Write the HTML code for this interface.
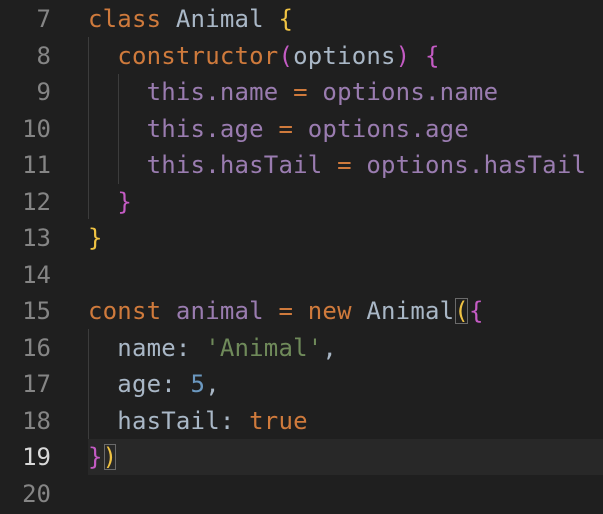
<html><head><style>
body{margin:0;background:#1f1f1f;width:603px;height:514px;overflow:hidden;position:relative;font-family:"DejaVu Sans Mono","Liberation Mono",monospace;font-size:24px;}
.l{position:absolute;left:0;height:36.5px;line-height:36.5px;white-space:pre;width:603px}
.n{position:absolute;right:552px;color:#858585;text-align:right}
.c{position:absolute;left:88px;color:#a9b7c6;letter-spacing:0.2px}
.k{color:#cf7a3c}.y{color:#f0c343}.p{color:#c45bc4}.v{color:#9a7cb0}.s{color:#6f8a5a}.m{color:#6b98c0}
.g{position:absolute;width:1px;background:#3c3c3c}
</style></head><body>
<div style="position:absolute;left:88px;top:439px;width:515px;height:36px;background:#282828"></div>
<div class="g" style="left:88px;top:37px;height:182px"></div>
<div class="g" style="left:118px;top:74px;height:110px"></div>
<div class="g" style="left:88px;top:329px;height:110px"></div>
<div class="l" style="top:1px"><span class="n">7</span><span class="c"><span class="k">class</span> Animal <span class="y">{</span></span></div>
<div class="l" style="top:37.5px"><span class="n">8</span><span class="c">  <span class="k">constructor</span><span class="p">(</span>options<span class="p">)</span> <span class="p">{</span></span></div>
<div class="l" style="top:74px"><span class="n">9</span><span class="c">    <span class="v">this.name</span> <span class="k">=</span> <span class="v">options.name</span></span></div>
<div class="l" style="top:110.5px"><span class="n">10</span><span class="c">    <span class="v">this.age</span> <span class="k">=</span> <span class="v">options.age</span></span></div>
<div class="l" style="top:147px"><span class="n">11</span><span class="c">    <span class="v">this.hasTail</span> <span class="k">=</span> <span class="v">options.hasTail</span></span></div>
<div class="l" style="top:183.5px"><span class="n">12</span><span class="c">  <span class="p">}</span></span></div>
<div class="l" style="top:220px"><span class="n">13</span><span class="c"><span class="y">}</span></span></div>
<div class="l" style="top:256.5px"><span class="n">14</span></div>
<div class="l" style="top:293px"><span class="n">15</span><span class="c"><span class="k">const</span> <span class="v">animal</span> <span class="k">=</span> <span class="k">new</span> Animal<span class="y" style="outline:1px solid #6a6a6a;outline-offset:-2px">(</span><span class="p">{</span></span></div>
<div class="l" style="top:329.5px"><span class="n">16</span><span class="c">  name: <span class="s">'Animal'</span>,</span></div>
<div class="l" style="top:366px"><span class="n">17</span><span class="c">  age: <span class="m">5</span>,</span></div>
<div class="l" style="top:402.5px"><span class="n">18</span><span class="c">  hasTail: <span class="k">true</span></span></div>
<div class="l" style="top:439px"><span class="n" style="color:#d8d8d8">19</span><span class="c"><span class="p">}</span><span class="y" style="outline:1px solid #6a6a6a;outline-offset:-2px">)</span></span></div>
<div class="l" style="top:475.5px"><span class="n">20</span></div>
</body></html>
